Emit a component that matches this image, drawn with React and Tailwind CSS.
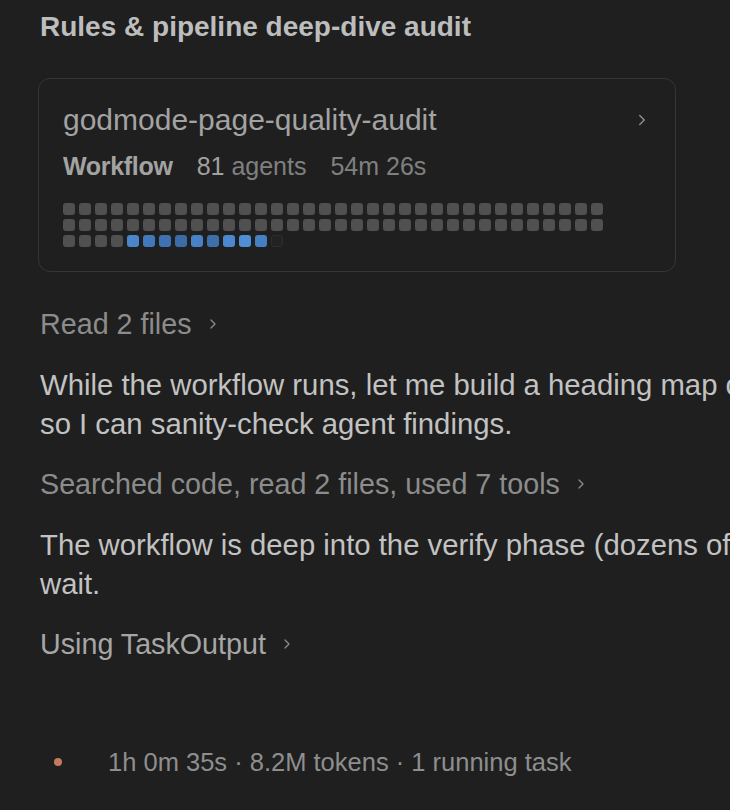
import { ChevronRight } from 'lucide-react';

const FONT = { fontFamily: '"Liberation Sans", Arial, sans-serif' };

const blues = ['#4a86cc', '#4279bd', '#3f72b2', '#3b6ca8', '#4782c6', '#3c6fab', '#4b88cf', '#4f8fd6', '#4480c3'];

function AgentGrid() {
  const cells = [];
  for (let i = 0; i < 68; i++) cells.push('done');
  for (let i = 0; i < 4; i++) cells.push('done');
  blues.forEach((c) => cells.push(c));
  cells.push('pending');

  return (
    <div className="grid w-[540px] grid-cols-[repeat(34,12px)] gap-x-[4px] gap-y-[4px]">
      {cells.map((c, i) => {
        if (c === 'done') return <div key={i} className="h-[12px] w-[12px] rounded-[3px] bg-[#505050]" />;
        if (c === 'pending')
          return <div key={i} className="h-[12px] w-[12px] rounded-[3px] border border-[#2e2e2e] bg-[#222222]" />;
        return <div key={i} className="h-[12px] w-[12px] rounded-[3px]" style={{ backgroundColor: c }} />;
      })}
    </div>
  );
}

function Step({ children, className = '' }) {
  return (
    <div className={`flex items-center gap-[13px] whitespace-nowrap text-[28.7px] leading-[36px] ${className}`}>
      <span>{children}</span>
      <ChevronRight size={16} strokeWidth={2} className="text-[#8a8a8a]" />
    </div>
  );
}

export default function App() {
  return (
    <div className="h-[810px] w-[730px] overflow-hidden bg-[#1f1f1f] pl-[40px]" style={FONT}>
      <h1 className="pt-[9px] text-[28px] font-bold leading-[36px] text-[#bdbdbd]">
        Rules &amp; pipeline deep-dive audit
      </h1>

      <div className="mt-[33px] w-[638px] -translate-x-[2px] rounded-[12px] border border-[#363636] px-[24px] pb-[24px] pt-[23px]">
        <div className="flex items-center justify-between">
          <div className="text-[30px] leading-[36px] text-[#a3a3a3]">godmode-page-quality-audit</div>
          <ChevronRight size={18} strokeWidth={2} className="text-[#8c8c8c]" />
        </div>
        <div className="mt-[12px] flex items-center gap-[24px] text-[25px] leading-[32px]">
          <span className="font-semibold text-[#a3a3a3] tracking-[-0.3px]">Workflow</span>
          <span>
            <span className="text-[#a0a0a0]">81</span> <span className="text-[#808080]">agents</span>
          </span>
          <span className="text-[#808080]">54m 26s</span>
        </div>
        <div className="mt-[21px]">
          <AgentGrid />
        </div>
      </div>

      <Step className="mt-[34px] text-[#8c8c8c]">Read 2 files</Step>

      <p className="mt-[23px] whitespace-nowrap text-[29.3px] leading-[39px] text-[#c2c2c2]">
        While the workflow runs, let me build a heading map of the rules
        <br />
        so I can sanity-check agent findings.
      </p>

      <Step className="mt-[23px] text-[#8c8c8c]">Searched code, read 2 files, used 7 tools</Step>

      <p className="mt-[23px] whitespace-nowrap text-[29.3px] leading-[39px] text-[#c2c2c2]">
        The workflow is deep into the verify phase (dozens of agents). I'll
        <br />
        wait.
      </p>

      <Step className="mt-[23px] text-[#a6a6a6]">Using TaskOutput</Step>

      <div className="mt-[84px] flex items-center">
        <span className="ml-[14px] h-[8px] w-[8px] rounded-full bg-[#c27a60]" />
        <span className="ml-[46px] whitespace-nowrap text-[25.5px] leading-[32px] text-[#8e8e8e]">
          1h 0m 35s · 8.2M tokens · 1 running task
        </span>
      </div>
    </div>
  );
}
